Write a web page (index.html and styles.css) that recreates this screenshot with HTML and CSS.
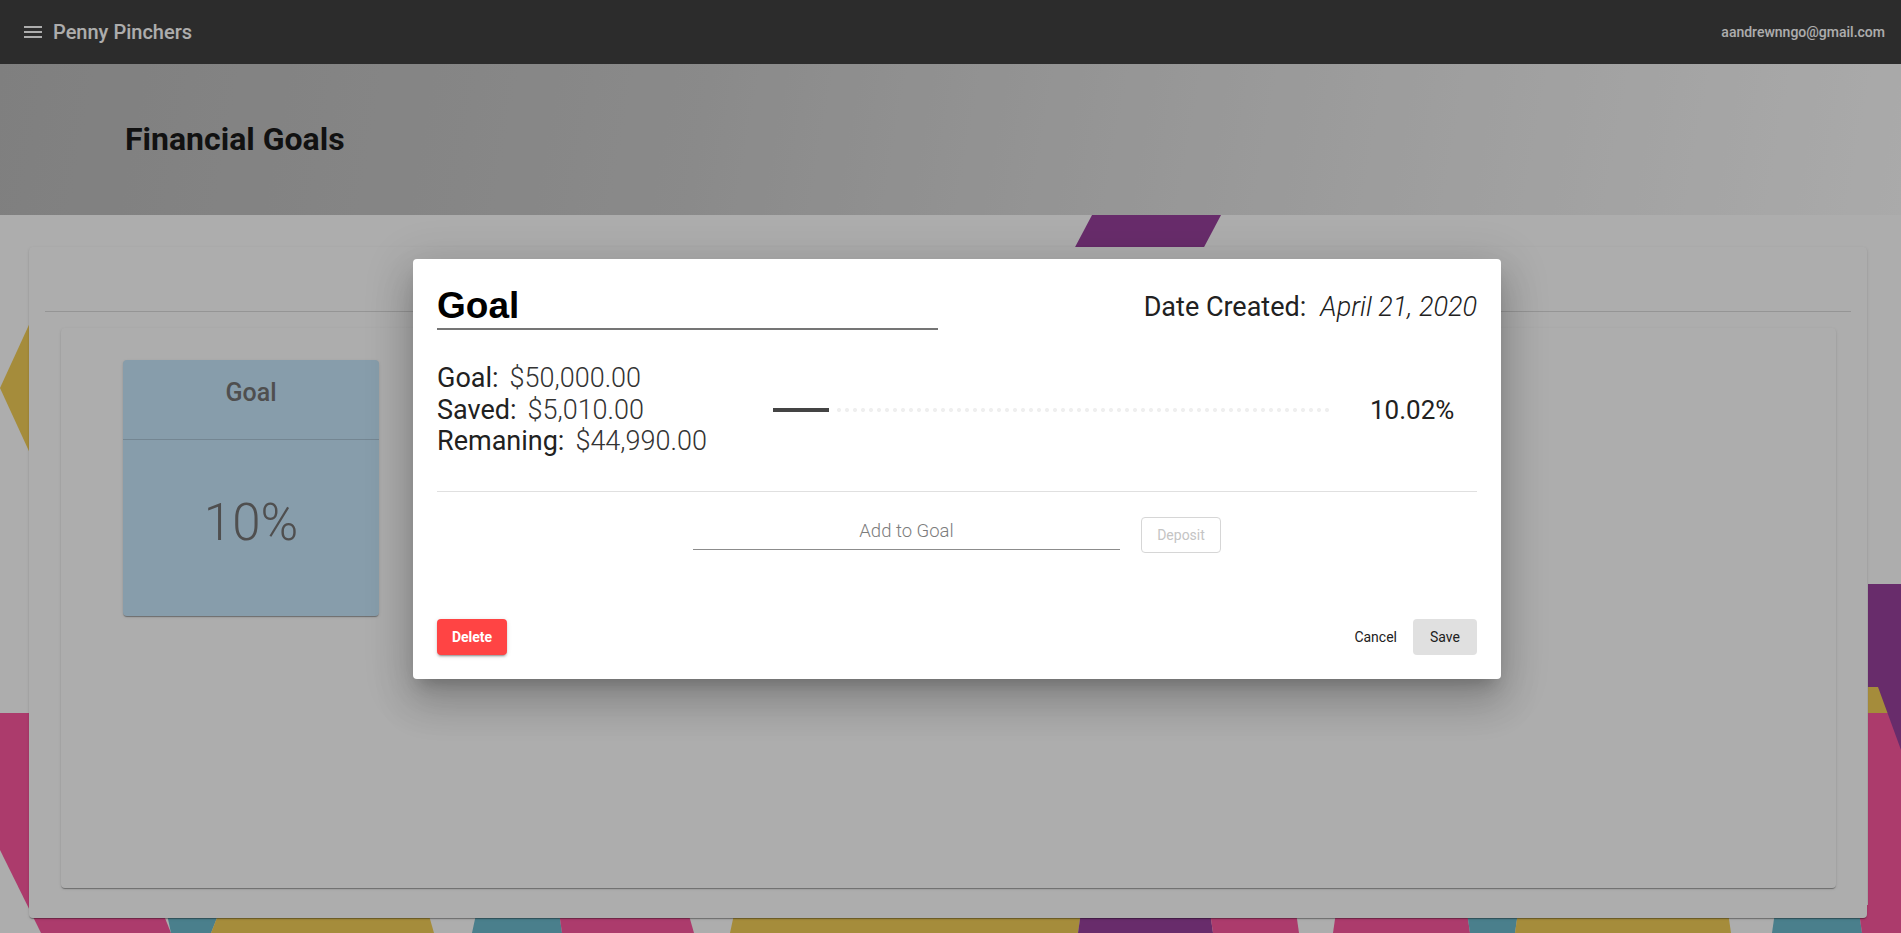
FILE: index.html
```html
<!DOCTYPE html>
<html lang="en">
<head>
<meta charset="utf-8">
<title>Penny Pinchers - Financial Goals</title>
<link rel="stylesheet" href="styles.css">
</head>
<body>
<div class="bg-art">
  <svg width="1901" height="933" viewBox="0 0 1901 933" xmlns="http://www.w3.org/2000/svg">
    <polygon fill="#9a429e" points="1100,200 1229,200 1176,300 1047,300"/>
    <polygon fill="#f4cf57" points="0,388 50,279 50,497"/>
    <polygon fill="#fe57a0" points="0,713 83,713 171,933 41,933 0,850"/>
    <polygon fill="#6dbbce" points="165,905 222,905 211,933 171,933"/>
    <polygon fill="#f4cf57" points="222,905 426,905 434,933 211,933"/>
    <polygon fill="#6dbbce" points="478,905 558,905 562,933 472,933"/>
    <polygon fill="#fe57a0" points="558,905 686,905 694,933 562,933"/>
    <polygon fill="#f4cf57" points="736,905 1082,905 1078,933 730,933"/>
    <polygon fill="#9a429e" points="1082,905 1209,905 1213,933 1078,933"/>
    <polygon fill="#fe57a0" points="1209,905 1295,905 1299,933 1213,933"/>
    <polygon fill="#fe57a0" points="1337,905 1466,905 1470,933 1333,933"/>
    <polygon fill="#6dbbce" points="1466,905 1519,905 1515,933 1470,933"/>
    <polygon fill="#f4cf57" points="1519,905 1727,905 1731,933 1515,933"/>
    <polygon fill="#6dbbce" points="1776,905 1858,905 1862,933 1772,933"/>
    <polygon fill="#fe57a0" points="1858,905 1901,905 1901,933 1862,933"/>
    <polygon fill="#fe57a0" points="1868,713 1901,713 1901,933 1868,933"/>
    <polygon fill="#f4cf57" points="1868,680 1880,680 1888,713 1868,713"/>
    <polygon fill="#9a429e" points="1868,584 1901,584 1901,750 1878,687 1868,687"/>
  </svg>
</div>

<header class="appbar">
  <div class="appbar-left">
    <svg class="menu-icon" viewBox="0 0 24 24" width="24" height="24"><path fill="#ffffff" d="M3 18h18v-2H3v2zm0-5h18v-2H3v2zm0-7v2h18V6H3z"/></svg>
    <span class="brand">Penny Pinchers</span>
  </div>
  <span class="email">aandrewnngo@gmail.com</span>
</header>

<section class="hero">
  <h1 class="hero-title">Financial Goals</h1>
</section>

<main class="main">
  <div class="card">
    <div class="card-head"></div>
    <div class="card-rule"></div>
    <div class="card-body">
      <div class="inner">
        <div class="tile">
          <div class="tile-head">Goal</div>
          <div class="tile-value">10%</div>
        </div>
      </div>
    </div>
  </div>
</main>

<div class="backdrop"></div>

<div class="dialog">
  <div class="dlg-title-row">
    <div class="title-input">Goal</div>
    <div class="date"><span class="date-label">Date Created:</span><span class="date-value">April 21, 2020</span></div>
  </div>

  <div class="stats-row">
    <div class="stats">
      <div class="stat"><span class="stat-label">Goal:</span><span class="stat-value">$50,000.00</span></div>
      <div class="stat"><span class="stat-label">Saved:</span><span class="stat-value">$5,010.00</span></div>
      <div class="stat"><span class="stat-label">Remaning:</span><span class="stat-value">$44,990.00</span></div>
    </div>
    <div class="progress">
      <div class="progress-bar" style="width:10.02%"></div>
      <div class="progress-dots"></div>
    </div>
    <div class="percent">10.02%</div>
  </div>

  <div class="dlg-divider"></div>

  <div class="deposit-row">
    <div class="amount-input"><span class="amount-placeholder">Add to Goal</span></div>
    <button class="btn btn-outlined" disabled>Deposit</button>
  </div>

  <div class="actions">
    <button class="btn btn-delete">Delete</button>
    <div class="actions-right">
      <button class="btn btn-text">Cancel</button>
      <button class="btn btn-save">Save</button>
    </div>
  </div>
</div>
</body>
</html>
```

FILE: styles.css
```css
* { box-sizing: border-box; }

html, body {
  margin: 0;
  padding: 0;
}

body {
  width: 1901px;
  height: 933px;
  overflow: hidden;
  position: relative;
  background: #ffffff;
  font-family: Roboto, "Noto Sans", Arial, sans-serif;
  color: rgba(0, 0, 0, 0.87);
}

.bg-art {
  position: absolute;
  top: 0;
  left: 0;
  z-index: 0;
  line-height: 0;
}

.appbar {
  position: relative;
  z-index: 1;
  height: 64px;
  background: #424242;
  display: flex;
  align-items: center;
  justify-content: space-between;
  padding: 0 16px 0 21px;
  box-shadow: 0 2px 4px -1px rgba(0,0,0,0.2), 0 4px 5px 0 rgba(0,0,0,0.14), 0 1px 10px 0 rgba(0,0,0,0.12);
}

.appbar-left {
  display: flex;
  align-items: center;
  gap: 8px;
}

.menu-icon { display: block; }

.brand {
  color: #ffffff;
  font-size: 20px;
  font-weight: 500;
}

.email {
  color: #ffffff;
  font-size: 14px;
  font-weight: 500;
}

.hero {
  position: relative;
  z-index: 1;
  height: 151px;
  display: flex;
  align-items: center;
  padding-left: 125px;
  padding-bottom: 2px;
  background: linear-gradient(100deg, #bcbcbc 0%, #c6c6c6 25%, #cccccc 37%, #e2e2e2 65%, #fbfbfb 100%);
}

.hero-title {
  margin: 0;
  font-size: 32px;
  font-weight: 700;
  color: #1a1a1a;
}

.main {
  position: relative;
  z-index: 1;
  padding: 32px 34px 0 29px;
}

.card {
  height: 671px;
  background: #ffffff;
  border-radius: 4px;
  box-shadow: 0 2px 1px -1px rgba(0,0,0,0.2), 0 1px 1px 0 rgba(0,0,0,0.14), 0 1px 3px 0 rgba(0,0,0,0.12);
}

.card-head { height: 64px; }

.card-rule {
  height: 1px;
  margin: 0 16px;
  background: #dcdcdc;
}

.card-body {
  padding: 16px 31px 0 32px;
}

.inner {
  height: 560px;
  padding: 32px 0 0 62px;
  background: #ffffff;
  border-radius: 4px;
  box-shadow: 0 2px 1px -1px rgba(0,0,0,0.2), 0 1px 1px 0 rgba(0,0,0,0.14), 0 1px 3px 0 rgba(0,0,0,0.12);
}

.tile {
  width: 256px;
  height: 256px;
  background: #c8e7fc;
  border-radius: 4px;
  box-shadow: 0 2px 1px -1px rgba(0,0,0,0.2), 0 1px 1px 0 rgba(0,0,0,0.14), 0 1px 3px 0 rgba(0,0,0,0.12);
  display: flex;
  flex-direction: column;
  color: #757575;
}

.tile-head {
  height: 80px;
  padding-top: 16px;
  text-align: center;
  font-size: 25px;
  line-height: 33px;
  font-weight: 500;
  border-bottom: 1px solid rgba(0,0,0,0.14);
}

.tile-value {
  flex: 1;
  display: flex;
  align-items: center;
  justify-content: center;
  padding-bottom: 12px;
  font-size: 51px;
  font-weight: 300;
}

.backdrop {
  position: absolute;
  inset: 0;
  z-index: 5;
  background: rgba(0, 0, 0, 0.32);
}

.dialog {
  position: absolute;
  z-index: 6;
  left: 413px;
  top: 259px;
  width: 1088px;
  height: 420px;
  padding: 24px;
  background: #ffffff;
  border-radius: 4px;
  box-shadow: 0 11px 15px -7px rgba(0,0,0,0.2), 0 24px 38px 3px rgba(0,0,0,0.14), 0 9px 46px 8px rgba(0,0,0,0.12);
  display: flex;
  flex-direction: column;
}

.dlg-title-row {
  display: flex;
  justify-content: space-between;
  align-items: baseline;
}

.title-input {
  width: 501px;
  height: 47px;
  line-height: 45px;
  font-family: "Liberation Sans", Arial, sans-serif;
  font-size: 37px;
  font-weight: 700;
  color: #000000;
  border-bottom: 2px solid #757575;
}

.date {
  font-size: 27px;
  color: #212121;
  white-space: pre;
  position: relative;
  top: -2px;
}

.date-label { font-weight: 400; }

.date-value {
  font-weight: 300;
  font-style: italic;
  margin-left: 14px;
}

.stats-row {
  margin-top: 33px;
  display: flex;
  align-items: center;
}

.stats {
  width: 336px;
  font-size: 27px;
  line-height: 31.5px;
}

.stat-label {
  font-weight: 400;
  color: #212121;
  margin-right: 11px;
}

.stat-value {
  font-weight: 300;
  color: #333333;
}

.progress {
  width: 560px;
  height: 4px;
  display: flex;
}

.progress-bar {
  height: 4px;
  background: #444444;
}

.progress-dots {
  flex: 1;
  height: 4px;
  margin-left: 6px;
  background-image: radial-gradient(circle, #efefef 0, #efefef 2px, transparent 2.2px);
  background-size: 8px 4px;
  background-repeat: repeat-x;
}

.percent {
  margin-left: 37px;
  font-size: 26px;
  color: #212121;
}

.dlg-divider {
  margin-top: 33px;
  height: 1px;
  background: #e0e0e0;
}

.deposit-row {
  margin-top: 25px;
  display: flex;
  justify-content: center;
  align-items: flex-start;
  gap: 21px;
}

.amount-input {
  width: 427px;
  height: 33px;
  padding-bottom: 4px;
  border-bottom: 1px solid #8c8c8c;
  text-align: center;
  line-height: 28px;
}

.amount-placeholder {
  font-size: 18.5px;
  font-weight: 300;
  color: #7c7c7c;
}

.btn {
  font-family: Roboto, "Noto Sans", Arial, sans-serif;
  font-size: 14px;
  font-weight: 500;
  line-height: 24px;
  height: 36px;
  border: none;
  border-radius: 4px;
  padding: 6px 16px;
  background: transparent;
  cursor: pointer;
  text-transform: none;
}

.btn-outlined {
  padding: 5px 15px;
  border: 1px solid #d6d6d6;
  color: #c4c4c4;
  font-weight: 400;
  width: 80px;
}

.actions {
  margin-top: 66px;
  display: flex;
  justify-content: space-between;
  align-items: center;
}

.actions-right {
  display: flex;
  gap: 8px;
}

.btn-delete {
  width: 70px;
  padding: 6px 0;
  background: #ff4444;
  color: #ffffff;
  font-weight: 700;
  box-shadow: 0 3px 1px -2px rgba(0,0,0,0.2), 0 2px 2px 0 rgba(0,0,0,0.14), 0 1px 5px 0 rgba(0,0,0,0.12);
}

.btn-text {
  padding: 6px 8px;
  color: #212121;
  font-weight: 400;
}

.btn-save {
  background: #e0e0e0;
  color: #212121;
  font-weight: 400;
  width: 64px;
}
```
